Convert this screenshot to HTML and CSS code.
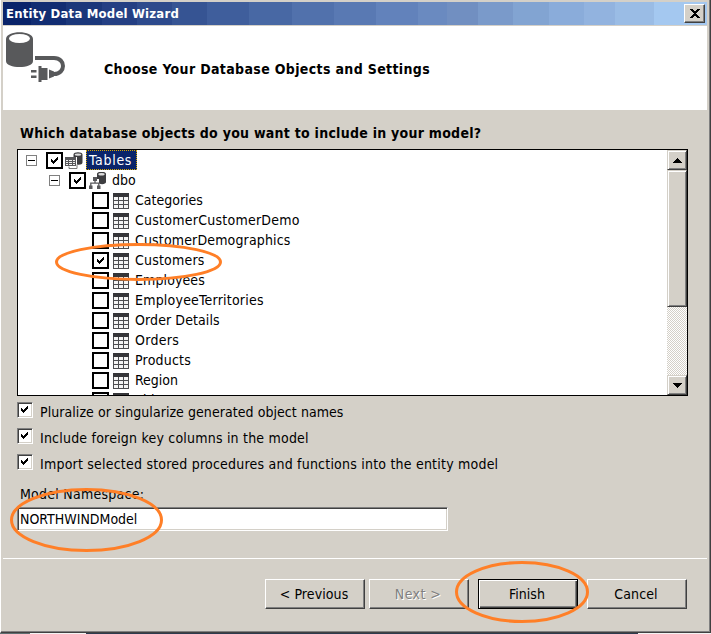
FILE: index.html
```html
<!DOCTYPE html>
<html lang="en">
<head>
<meta charset="utf-8">
<title>Entity Data Model Wizard</title>
<link rel="stylesheet" href="styles.css">
</head>
<body>
<svg class="defs" width="0" height="0">
  <symbol id="check" viewBox="0 0 9 9"><path d="M1 3v3l2 2 5-5V0L3 5z" shape-rendering="crispEdges"/></symbol>
  <symbol id="table" viewBox="0 0 16 16"><path fill="#4d4d50" d="M0 0h16v16H0z"/><path fill="#353538" d="M0 0h16v4H0z"/><path fill="#f5f5f5" d="M1 4h4v3H1zM6 4h4v3H6zM11 4h4v3h-4zM1 8h4v3H1zM6 8h4v3H6zM11 8h4v3h-4zM1 12h4v3H1zM6 12h4v3H6zM11 12h4v3h-4z"/></symbol>
</svg>
<main class="window">
  <header class="titlebar"><h1 class="t-title">Entity Data Model Wizard</h1>
    <button class="close" aria-label="Close"><svg width="10" height="9" viewBox="0 0 10 9" shape-rendering="crispEdges"><path d="M0 0h3v1h1v1h2V1h1V0h3v1H9v1H8v1H7v1H6v1h1v1h1v1h1v1h1v1H7V8H6V7H4v1H3v1H0V8h1V7h1V6h1V5h1V4H3V3H2V2H1V1H0z"/></svg></button>
  </header>
  <section class="banner">
    <svg class="logo" width="61" height="52" viewBox="0 0 61 52"><path fill="#58595b" d="M0 7C0-2 27-2 27 7v22c0 8-27 8-27 0z"/><ellipse cx="13.500" cy="6.500" rx="10.500" ry="4.500" fill="#fff"/><path d="M29 26h19c12 0 12 16 0 16" fill="none" stroke="#58595b" stroke-width="4"/><path fill="#58595b" d="M32.500 34h3v2h6v12h-6v2h-3zM25 38h5.500v2.500H25zM25 43.500h5.500V46H25zM43 37.500l5 2v5l-5 2z"/></svg>
    <h2 class="t-banner">Choose Your Database Objects and Settings</h2>
  </section>
  <section class="content">
    <h3 class="t-question">Which database objects do you want to include in your model?</h3>
    <div class="treebox">
      <div class="tree">
        <div class="row root"><i class="expander"></i><i class="box"><svg><use href="#check"/></svg></i>
          <svg class="icon-root" width="18" height="17" viewBox="0 0 18 17"><path fill="#3d3d40" d="M8.500 2.500c0-3 9-3 9 0v8c0 2-3 2.500-5.500 2V5H8.500z"/><ellipse cx="13" cy="2.600" rx="3.300" ry="1.200" fill="#ddd"/><path fill="#58585b" d="M0 5h11v9H0z"/><path fill="#f0f0f0" d="M1 8h2v1H1zM4 8h3v1H4zM8 8h2v1H8zM1 10h2v1H1zM4 10h3v1H4zM8 10h2v1H8zM1 12h2v1H1zM4 12h3v1H4zM8 12h2v1H8z"/><path d="M4 14.500v2h8v-4" fill="none" stroke="#777"/></svg>
          <span class="selected"><span class="t-tables">Tables</span></span></div>
        <div class="row schema"><i class="expander"></i><i class="box"><svg><use href="#check"/></svg></i>
          <svg class="icon-schema" width="18" height="17" viewBox="0 0 18 17"><path fill="#3d3d40" d="M8 2c0-3 9-3 9 0v8c0 2-4 3-7 1.500V7H8z"/><ellipse cx="12.500" cy="2.300" rx="3.200" ry="1.200" fill="#ddd"/><path fill="#58585b" d="M4 5h4v4H4zM0 13.500h3.500V17H0zM8 13.500h3.500V17H8z"/><path d="M6 8v3M1.800 14v-2.800h8V14" fill="none" stroke="#58585b" stroke-width="1.300"/></svg>
          <span class="t-dbo">dbo</span></div>
        <div class="row"><i class="box"></i><svg class="table"><use href="#table"/></svg><span class="t1">Categories</span></div>
        <div class="row"><i class="box"></i><svg class="table"><use href="#table"/></svg><span class="t2">CustomerCustomerDemo</span></div>
        <div class="row"><i class="box"></i><svg class="table"><use href="#table"/></svg><span class="t3">CustomerDemographics</span></div>
        <div class="row"><i class="box"><svg><use href="#check"/></svg></i><svg class="table"><use href="#table"/></svg><span class="t4">Customers</span></div>
        <div class="row"><i class="box"></i><svg class="table"><use href="#table"/></svg><span class="t5">Employees</span></div>
        <div class="row"><i class="box"></i><svg class="table"><use href="#table"/></svg><span class="t6">EmployeeTerritories</span></div>
        <div class="row"><i class="box"></i><svg class="table"><use href="#table"/></svg><span class="t7">Order Details</span></div>
        <div class="row"><i class="box"></i><svg class="table"><use href="#table"/></svg><span class="t8">Orders</span></div>
        <div class="row"><i class="box"></i><svg class="table"><use href="#table"/></svg><span class="t9">Products</span></div>
        <div class="row"><i class="box"></i><svg class="table"><use href="#table"/></svg><span class="t10">Region</span></div>
        <div class="row"><i class="box"></i><svg class="table"><use href="#table"/></svg><span class="t11">Shippers</span></div>
      </div>
      <div class="scrollbar">
        <div class="scroll-btn"><svg width="9" height="5" shape-rendering="crispEdges"><path d="M4 0h1v1h1v1h1v1h1v1h1v1H0V4h1V3h1V2h1V1h1z"/></svg></div>
        <div class="thumb"></div><div class="track"></div>
        <div class="scroll-btn"><svg width="9" height="5" shape-rendering="crispEdges"><path d="M0 0h9v1H8v1H7v1H6v1H5v1H4V4H3V3H2V2H1V1H0z"/></svg></div>
      </div>
    </div>
    <div class="options">
      <label><i class="option-box"><svg><use href="#check"/></svg></i><span class="o1">Pluralize or singularize generated object names</span></label>
      <label><i class="option-box"><svg><use href="#check"/></svg></i><span class="o2">Include foreign key columns in the model</span></label>
      <label><i class="option-box"><svg><use href="#check"/></svg></i><span class="o3">Import selected stored procedures and functions into the entity model</span></label>
    </div>
    <div class="namespace-label"><span class="t-ns">Model Namespace:</span></div>
    <div class="field"><span class="t-field">NORTHWINDModel</span></div>
  </section>
  <footer>
    <button class="btn"><span class="b1">&lt; Previous</span></button>
    <button class="btn disabled"><span class="b2">Next &gt;</span></button>
    <button class="btn default"><span class="b3">Finish</span></button>
    <button class="btn"><span class="b4">Cancel</span></button>
  </footer>
</main>
<div class="taskbar"><i></i><i></i><i></i></div>
<svg class="annotations" width="711" height="634" fill="none" stroke="#ff7f27" stroke-width="3">
  <ellipse cx="138.500" cy="262" rx="82" ry="17.500"/>
  <ellipse cx="86.500" cy="520" rx="75" ry="30.500"/>
  <ellipse cx="522" cy="592" rx="65.500" ry="29.500"/>
</svg>
</body>
</html>
```
FILE: styles.css
```css
* { box-sizing: border-box; }
body { margin: 0; width: 711px; height: 634px; overflow: hidden; background: #d4d0c8; color: #000; font: 14px/20px "DejaVu Sans Condensed", "DejaVu Sans", sans-serif; font-stretch: condensed; }
h1, h2, h3 { margin: 0; white-space: nowrap; }
i { display: block; flex: none; }
svg { flex: none; }
span { white-space: nowrap; }
.defs, .annotations { position: absolute; left: 0; top: 0; pointer-events: none; }
.window { display: flex; flex-direction: column; height: 633px; padding: 2px 1px 0 2px; border: solid; border-width: 0 1px 1px; border-color: #fff #404040 #404040 #fff; box-shadow: inset -1px -1px #808080; }
.titlebar { display: flex; align-items: center; justify-content: space-between; height: 23px; margin-right: 2px; padding: 0 2px; background: linear-gradient(90deg, #0a246a 0 4%, #122d72 4% 9%, #1b377a 9% 14%, #243f83 14% 19%, #2d4a8c 19% 24%, #365493 24% 29%, #3f5e9c 29% 35%, #4868a4 35% 41%, #5171ac 41% 47%, #5979b3 47% 53%, #6282bb 53% 59%, #6a8ac0 59% 63%, #718fc1 63% 67.500%, #7a9aca 67.500% 72.500%, #82a4d2 72.500% 77.500%, #8aacda 77.500% 82.500%, #92b3df 82.500% 87%, #9abce5 87% 92.500%, #a4c8f0 92.500%); }
.titlebar h1 { color: #fff; font-size: 13px; line-height: 22px; letter-spacing: .2px; padding-left: 1px; }
.close { display: flex; align-items: center; justify-content: center; width: 21px; height: 19px; padding: 0; background: #d4d0c8; border: 1px solid; border-color: #fff #404040 #404040 #fff; box-shadow: inset -1px -1px #808080; }
.banner { display: flex; align-items: flex-start; height: 84px; margin: 1px 2px 0 0; padding: 6px 0 0 3px; background: #fff; }
.banner h2 { margin: 27px 0 0 37px; font-size: 14px; line-height: 20px; letter-spacing: .35px; }
.content { padding: 13px 0 0 14px; }
.content h3 { height: 26px; padding-left: 3px; font-size: 14px; line-height: 20px; letter-spacing: .26px; }
.treebox { display: flex; width: 671px; height: 247px; border: 1px solid #000; background: #fff; }
.tree { flex: 1; overflow: hidden; }
.row { display: flex; height: 20px; padding-left: 74px; }
.row > span { margin-left: 6px; }
.root { padding-left: 8px; }
.schema { padding-left: 31px; }
.root > .selected { height: 20px; margin-left: 3px; width: 51px; padding-left: 3px; background: #0a246a; color: #fff; outline: 1px dotted #d8a600; outline-offset: -1px; line-height: 20px; }
.schema > span { margin-left: 5px; }
.t-tables { letter-spacing: .7px; }
.t2, .t-ns { letter-spacing: .25px; }
.t3 { letter-spacing: .15px; }
.t4, .t6, .t9, .o2 { letter-spacing: .21px; }
.t5, .t7, .b1, .b4 { letter-spacing: .1px; }
.t8 { letter-spacing: .3px; }
.o1 { letter-spacing: .06px; }
.o3 { letter-spacing: .215px; }
.b2 { letter-spacing: .4px; }
.btn span { padding-right: 2px; }
.expander { width: 11px; height: 11px; margin: 5px 9px 0 0; border: 1px solid #808080; background: linear-gradient(#000, #000) 1px 4px / 7px 1px no-repeat; }
.box { width: 17px; height: 17px; margin-top: 2px; padding: 2px; border: 2px solid #000; background: #fff; }
.box svg, .option-box svg { display: block; width: 9px; height: 9px; }
.icon-root { margin: 2px 0 0 2px; }
.icon-schema { margin: 2px 0 0 3px; }
.table { width: 16px; height: 16px; margin: 3px 0 0 4px; }
.scrollbar { display: flex; flex-direction: column; width: 20px; }
.scroll-btn, .thumb { border: 1px solid; border-color: #d4d0c8 #404040 #404040 #d4d0c8; background: #d4d0c8; box-shadow: inset 1px 1px #fff, inset -1px -1px #808080; }
.scroll-btn { display: flex; align-items: center; justify-content: center; height: 20px; }
.thumb { height: 137px; }
.track { flex: 1; background: repeating-conic-gradient(#fff 0 25%, #d4d0c8 0 50%) 0 0 / 2px 2px; }
.options { padding-top: 6px; }
.options label { display: flex; height: 26px; }
.option-box { width: 16px; height: 16px; margin-right: 7px; padding: 2px; border: 1px solid; border-color: #808080 #fff #fff #808080; background: #fff; box-shadow: inset 1px 1px #404040, inset -1px -1px #d4d0c8; }
.namespace-label { height: 27px; padding: 4px 0 0 3px; }
.field { width: 431px; height: 24px; padding-left: 2px; border: 1px solid; border-color: #808080 #fff #fff #808080; background: #fff; box-shadow: inset 1px 1px #404040, inset -1px -1px #d4d0c8; font-size: 14px; line-height: 22px; }
footer { display: flex; height: 70px; margin: 27px 2px 0 0; padding: 20px 0 0 262px; border-top: 1px solid #fff; }
.btn { width: 100px; height: 30px; margin: 0 4px 0 0; padding: 0; border: 1px solid; border-color: #fff #404040 #404040 #fff; background: #d4d0c8; box-shadow: inset -1px -1px #808080; color: #000; font: inherit; }
.disabled { color: #808080; text-shadow: 1px 1px #fff; margin-right: 9px; }
.default { margin-right: 9px; border-color: #000; box-shadow: inset 1px 1px #fff, inset -1px -1px #404040, inset -2px -2px #808080; }
.taskbar { display: flex; height: 1px; background: #2d3b4e; }
.taskbar i:nth-child(1) { width: 30px; background: #5d6e70; }
.taskbar i:nth-child(2) { width: 56px; background: #f4f4f4; }
.taskbar i:nth-child(3) { width: 73px; margin-left: 552px; background: #f4f4f4; }
```
